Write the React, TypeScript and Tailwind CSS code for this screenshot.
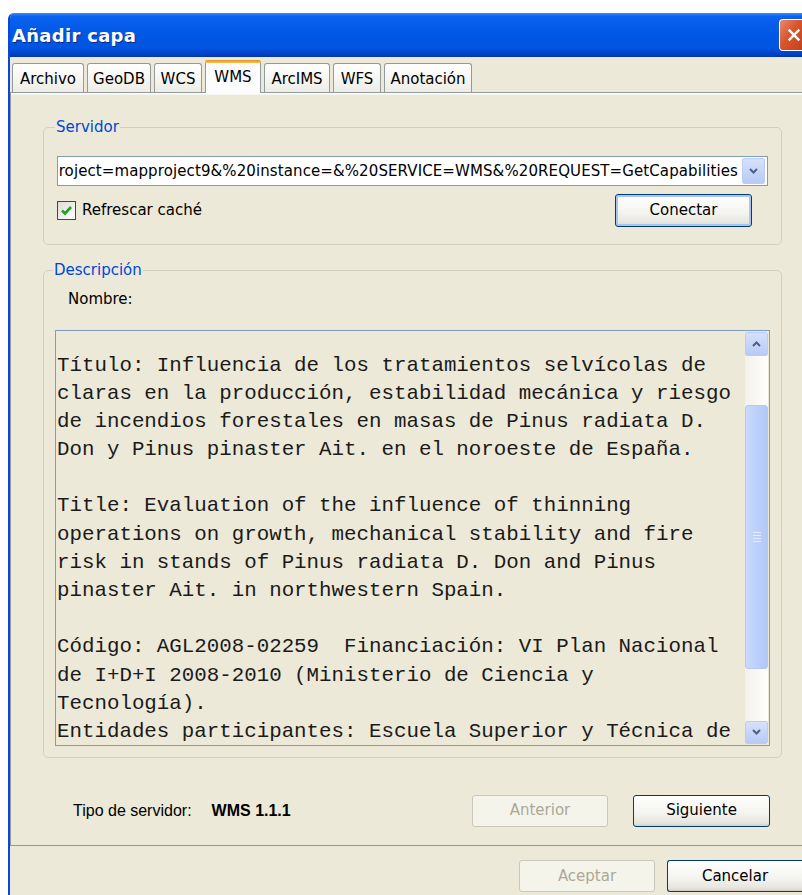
import React from "react";

const ui = { fontFamily: '"DejaVu Sans", Verdana, sans-serif' };
const mono = { fontFamily: '"Liberation Mono", "Courier New", monospace' };
const arial = { fontFamily: '"Liberation Sans", Arial, sans-serif' };

const tabs = [
  { label: "Archivo", w: "w-[72px]" },
  { label: "GeoDB", w: "w-[64px]" },
  { label: "WCS", w: "w-[48px]" },
  { label: "WMS", w: "w-[56px]", active: true },
  { label: "ArcIMS", w: "w-[66px]" },
  { label: "WFS", w: "w-[48px]" },
  { label: "Anotación", w: "w-[88px]" },
];

const description = [
  "Título: Influencia de los tratamientos selvícolas de",
  "claras en la producción, estabilidad mecánica y riesgo",
  "de incendios forestales en masas de Pinus radiata D.",
  "Don y Pinus pinaster Ait. en el noroeste de España.",
  "",
  "Title: Evaluation of the influence of thinning",
  "operations on growth, mechanical stability and fire",
  "risk in stands of Pinus radiata D. Don and Pinus",
  "pinaster Ait. in northwestern Spain.",
  "",
  "Código: AGL2008-02259  Financiación: VI Plan Nacional",
  "de I+D+I 2008-2010 (Ministerio de Ciencia y",
  "Tecnología).",
  "Entidades participantes: Escuela Superior y Técnica de",
];

const Chevron = ({ up = false }: { up?: boolean }) => (
  <svg width="9" height="6" viewBox="0 0 9 6" className={up ? "rotate-180" : ""}>
    <path d="M1 1 L4.5 4.5 L8 1" fill="none" stroke="#4d6185" strokeWidth="2" />
  </svg>
);

const XpButton = ({
  label,
  className = "",
  disabled = false,
  focused = false,
}: {
  label: string;
  className?: string;
  disabled?: boolean;
  focused?: boolean;
}) => (
  <div
    className={
      "flex h-[32px] items-center justify-center rounded-[3px] border text-[15px] " +
      (disabled
        ? "border-[#cac8bb] bg-[#f5f4ea] text-[#aca899] "
        : "border-[#003c74] bg-[linear-gradient(to_bottom,#ffffff_0%,#f3f3ef_60%,#e6e5dd_90%,#d6d0c5_100%)] text-black ") +
      (focused ? "shadow-[inset_0_0_0_2px_#a9c4ee] " : "") +
      className
    }
  >
    {label}
  </div>
);

const Legend = ({ children }: { children: React.ReactNode }) => (
  <legend className="-ml-[2px] px-[1px] text-[15px] leading-[18px] text-[#0046d5]">{children}</legend>
);

export default function App() {
  return (
    <div className="min-h-screen overflow-hidden bg-white pl-[8px] pt-[13px]" style={ui}>
      <div className="flex h-[882px] w-[794px] flex-col overflow-hidden rounded-tl-[6px] border-l-2 border-[#0a46dc] bg-[#ece9d8]">
        {/* title bar */}
        <div className="flex h-[44px] shrink-0 items-center justify-between bg-[linear-gradient(to_bottom,#3a8cf8_0%,#0b62ef_8%,#0058e6_45%,#0054e0_80%,#0044c8_92%,#0036b0_100%)] pl-[2px]">
          <span className="text-[18px] font-bold tracking-[0.3px] text-white [text-shadow:1px_1px_0_#0a2a8a]">
            Añadir capa
          </span>
          <div className="flex h-[32px] w-[23px] items-center justify-center rounded-l-[4px] border-y-[1.5px] border-l-[1.5px] border-white bg-[linear-gradient(to_bottom_right,#e98a6d_0%,#d9562d_45%,#c2411d_100%)]">
            <svg width="18" height="18" viewBox="0 0 18 18" className="ml-[6px]">
              <path d="M3 3 L15 15 M15 3 L3 15" stroke="white" strokeWidth="2.6" />
            </svg>
          </div>
        </div>

        {/* tab strip */}
        <div className="flex h-[35px] shrink-0 items-end gap-[3px] pl-[2px]">
          {tabs.map((t) =>
            t.active ? (
              <div
                key={t.label}
                className={`${t.w} relative z-10 -mb-[1px] flex h-[33px] items-start justify-center rounded-t-[3px] border-x border-[#919b9c] bg-[#fcfcfe] pt-[6px] text-[15px] text-black`}
              >
                <div className="absolute -left-px -right-px top-0 h-[3px] rounded-t-[3px] bg-[linear-gradient(to_bottom,#e68b2c,#ffc73c)]" />
                {t.label}
              </div>
            ) : (
              <div
                key={t.label}
                className={`${t.w} flex h-[29px] items-center justify-center rounded-t-[3px] border-x border-t border-[#919b9c] bg-[linear-gradient(to_bottom,#ffffff,#f3f2ec_70%,#ecebe5)] pt-[2px] text-[15px] text-black`}
              >
                {t.label}
              </div>
            )
          )}
        </div>

        {/* tab pane */}
        <div className="flex h-[754px] shrink-0 flex-col border-x border-y border-[#919b9c] border-r-0 bg-[#ece9d8] pl-[32px] pr-[20px] shadow-[inset_0_1px_0_#fcfcfe,inset_0_2px_0_#f6f5ef]">
          <fieldset className="mt-[25px] rounded-[5px] border border-[#d0d0bf] px-[13px] pb-[17px] pt-[20px]">
            <Legend>Servidor</Legend>
            <div className="flex h-[30px] items-center border border-[#7f9db9] bg-white pr-[2px]">
              <div className="flex flex-1 justify-end overflow-hidden whitespace-nowrap pr-[4px] text-[15px] tracking-[0.1px] text-black">
                roject=mapproject9&amp;%20instance=&amp;%20SERVICE=WMS&amp;%20REQUEST=GetCapabilities
              </div>
              <div className="flex h-[26px] w-[23px] items-center justify-center rounded-[2px] border border-[#b9cdf5] bg-[linear-gradient(to_bottom,#d6e1fb,#b7cbf6)]">
                <Chevron />
              </div>
            </div>
            <div className="mt-[8px] flex items-center justify-between">
              <label className="flex items-center gap-[6px] text-[15px] text-black">
                <span className="flex h-[19px] w-[19px] items-center justify-center border border-[#1c5180] bg-[linear-gradient(to_bottom_right,#dcdbd3,#ffffff)]">
                  <svg width="13" height="13" viewBox="0 0 13 13">
                    <path d="M2 6.5 L5 9.5 L11 3" fill="none" stroke="#21a121" strokeWidth="2.6" />
                  </svg>
                </span>
                Refrescar caché
              </label>
              <XpButton label="Conectar" focused className="mr-[16px] h-[33px] w-[137px]" />
            </div>
          </fieldset>

          <fieldset className="mt-[16px] rounded-[5px] border border-[#d0d0bf] px-[11px] pb-[11px] pt-[0px]">
            <Legend>Descripción</Legend>
            <div className="pl-[13px] pt-[9px] text-[15px] text-black">Nombre:</div>
            <div className="mt-[19px] flex h-[416px] border border-[#7f9db9] bg-[#ece9d8] pr-[1px]">
              <div
                className="flex-1 overflow-hidden whitespace-pre pl-[1px] pt-[21px] text-[20.8px] leading-[28.2px] text-[#1a1a1a]"
                style={mono}
              >
                {description.map((line, i) => (
                  <div key={i} className="h-[28.2px]">
                    {line}
                  </div>
                ))}
              </div>
              {/* vertical scrollbar */}
              <div className="my-[1px] flex w-[23px] flex-col bg-[linear-gradient(to_right,#f3f1ec,#fefefb)]">
                <div className="flex h-[24px] items-center justify-center rounded-[2px] border border-[#b9cdf5] bg-[linear-gradient(to_bottom,#d6e1fb,#b7cbf6)]">
                  <Chevron up />
                </div>
                <div className="h-[49px]" />
                <div className="flex h-[264px] items-center justify-center rounded-[3px] border border-[#b3c8f5] bg-[linear-gradient(to_right,#cad9fc,#bcd0fa_50%,#b2c8f7)]">
                  <div className="flex flex-col gap-[2px]">
                    <div className="h-px w-[8px] bg-[#e6eefc]" />
                    <div className="h-px w-[8px] bg-[#e6eefc]" />
                    <div className="h-px w-[8px] bg-[#e6eefc]" />
                    <div className="h-px w-[8px] bg-[#e6eefc]" />
                  </div>
                </div>
                <div className="flex-1" />
                <div className="flex h-[23px] items-center justify-center rounded-[2px] border border-[#b9cdf5] bg-[linear-gradient(to_bottom,#d6e1fb,#b7cbf6)]">
                  <Chevron />
                </div>
              </div>
            </div>
          </fieldset>

          <div className="mt-[37px] flex items-center pl-[30px] pr-[12px]">
            <div className="flex items-center text-[16px] text-black" style={arial}>
              <span>Tipo de servidor:</span>
              <span className="ml-[20px] font-bold">WMS 1.1.1</span>
            </div>
            <XpButton label="Anterior" disabled className="ml-auto w-[136px]" />
            <XpButton label="Siguiente" className="ml-[25px] w-[137px]" />
          </div>
        </div>

        {/* dialog buttons */}
        <div className="flex flex-1 justify-end gap-[12px] pt-[14px]">
          <XpButton label="Aceptar" disabled className="w-[136px]" />
          <XpButton label="Cancelar" className="w-[135px] rounded-r-none border-r-0" />
        </div>
      </div>
    </div>
  );
}
